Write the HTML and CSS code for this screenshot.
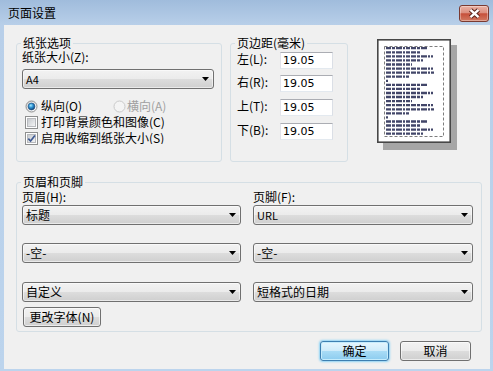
FILE: index.html
```html
<!DOCTYPE html>
<html lang="zh-CN">
<head>
<meta charset="utf-8">
<title>页面设置</title>
<link rel="stylesheet" href="styles.css">
</head>
<body>
<div class="win">
  <div class="titlebar">
    <span class="title">页面设置</span>
    <div class="close">
      <svg width="13" height="11" viewBox="0 0 13 11"><path d="M2.5 1.8 L10.5 9.2 M10.5 1.8 L2.5 9.2" stroke="#5a221a" stroke-width="4.4" fill="none"/><path d="M2.5 1.8 L10.5 9.2 M10.5 1.8 L2.5 9.2" stroke="#ffffff" stroke-width="2.4" fill="none"/></svg>
    </div>
  </div>
  <div class="client">
    <div class="toprow">
      <div class="grp paper">
        <div class="legend">纸张选项</div>
        <div class="lbl">纸张大小(Z):</div>
        <div class="combo paper-combo"><span class="ct lat">A4</span><svg class="arrow" width="7" height="4" viewBox="0 0 7 4"><path d="M0 0H7L3.5 4Z"/></svg></div>
        <div class="radios">
          <div class="opt first">
            <svg width="13" height="13" viewBox="0 0 13 13"><defs><linearGradient id="rbg1" x1="0" y1="0" x2="1" y2="1"><stop offset="0" stop-color="#cfd1d4"/><stop offset="1" stop-color="#ffffff"/></linearGradient><radialGradient id="rdot1" cx="40%" cy="35%" r="70%"><stop offset="0" stop-color="#a8ecff"/><stop offset=".45" stop-color="#2e93d4"/><stop offset="1" stop-color="#0c3c6e"/></radialGradient></defs><circle cx="6.5" cy="6.5" r="5.5" fill="url(#rbg1)" stroke="#8e8f8f"/><circle cx="6.5" cy="6.5" r="3.4" fill="url(#rdot1)" stroke="#1c4a7a" stroke-width=".6"/></svg>
            <span class="t">纵向(O)</span>
          </div>
          <div class="opt disabled">
            <svg width="13" height="13" viewBox="0 0 13 13"><circle cx="6.5" cy="6.5" r="5.5" fill="#f4f4f4" stroke="#cacaca"/></svg>
            <span class="t">横向(A)</span>
          </div>
        </div>
        <div class="opt">
          <svg width="13" height="13" viewBox="0 0 13 13"><defs><linearGradient id="cbg1" x1="0" y1="0" x2="1" y2="1"><stop offset="0" stop-color="#c3c7cc"/><stop offset="1" stop-color="#f7f7f7"/></linearGradient></defs><rect x=".5" y=".5" width="12" height="12" fill="#fff" stroke="#8e8f8f"/><rect x="2.5" y="2.5" width="8" height="8" fill="url(#cbg1)" stroke="#b7b9bd"/></svg>
          <span class="t">打印背景颜色和图像(C)</span>
        </div>
        <div class="opt">
          <svg width="13" height="13" viewBox="0 0 13 13"><defs><linearGradient id="cbg2" x1="0" y1="0" x2="1" y2="1"><stop offset="0" stop-color="#c3c7cc"/><stop offset="1" stop-color="#f7f7f7"/></linearGradient></defs><rect x=".5" y=".5" width="12" height="12" fill="#fff" stroke="#8e8f8f"/><rect x="2.5" y="2.5" width="8" height="8" fill="url(#cbg2)" stroke="#b7b9bd"/><path d="M3.3 6.6 L5.6 9 L9.9 3.4" stroke="#3f5a93" stroke-width="1.7" fill="none"/></svg>
          <span class="t clip">启用收缩到纸张大小(S)</span>
        </div>
      </div>

      <div class="grp margins">
        <div class="legend">页边距(毫米)</div>
        <div class="mrow"><span class="mlbl">左(L):</span><div class="input">19.05</div></div>
        <div class="mrow"><span class="mlbl">右(R):</span><div class="input">19.05</div></div>
        <div class="mrow"><span class="mlbl">上(T):</span><div class="input">19.05</div></div>
        <div class="mrow"><span class="mlbl">下(B):</span><div class="input">19.05</div></div>
      </div>

      <div class="preview">
        <svg width="80" height="111" viewBox="0 0 80 111">
          <rect x="6" y="6" width="74" height="105" fill="#a6a6a6"/>
          <rect x="0.8" y="0.8" width="72.4" height="102.4" fill="#ffffff" stroke="#474747" stroke-width="1.6"/>
          <rect x="7.5" y="7.5" width="59" height="90" fill="none" stroke="#7d7d7d" stroke-dasharray="3 2"/>
          <g stroke="#22264f" stroke-width="2.3" stroke-dasharray="5 1 3 1 6 1 2 1 4 1" fill="none" opacity=".85">
            <path d="M9 9.2h42"/><path d="M9 13.3h34"/><path d="M9 17.3h47"/><path d="M9 21.4h37"/><path d="M9 25.5h26"/><path d="M9 29.6h47"/><path d="M9 33.6h48"/><path d="M9 37.7h23"/><path d="M9 41.8h2"/>
            <path d="M9 45.8h42"/><path d="M9 49.9h34"/><path d="M9 54h47"/><path d="M9 58h37"/><path d="M9 62.1h26"/><path d="M9 66.2h47"/><path d="M9 70.3h48"/><path d="M9 74.3h23"/><path d="M9 78.4h2"/>
            <path d="M9 82.5h42"/><path d="M9 86.5h34"/><path d="M9 90.6h47"/><path d="M9 94.7h37"/>
          </g>
        </svg>
      </div>
    </div>

    <div class="grp hf">
      <div class="legend">页眉和页脚</div>
      <div class="cols">
        <div class="col left">
          <div class="lbl">页眉(H):</div>
          <div class="combo c1"><span class="ct">标题</span><svg class="arrow" width="7" height="4" viewBox="0 0 7 4"><path d="M0 0H7L3.5 4Z"/></svg></div>
          <div class="combo c2"><span class="ct">-空-</span><svg class="arrow" width="7" height="4" viewBox="0 0 7 4"><path d="M0 0H7L3.5 4Z"/></svg></div>
          <div class="combo c3"><span class="ct">自定义</span><svg class="arrow" width="7" height="4" viewBox="0 0 7 4"><path d="M0 0H7L3.5 4Z"/></svg></div>
          <div class="btn fontbtn">更改字体(N)</div>
        </div>
        <div class="col right">
          <div class="lbl">页脚(F):</div>
          <div class="combo c1"><span class="ct lat">URL</span><svg class="arrow" width="7" height="4" viewBox="0 0 7 4"><path d="M0 0H7L3.5 4Z"/></svg></div>
          <div class="combo c2"><span class="ct">-空-</span><svg class="arrow" width="7" height="4" viewBox="0 0 7 4"><path d="M0 0H7L3.5 4Z"/></svg></div>
          <div class="combo c3"><span class="ct">短格式的日期</span><svg class="arrow" width="7" height="4" viewBox="0 0 7 4"><path d="M0 0H7L3.5 4Z"/></svg></div>
        </div>
      </div>
    </div>

    <div class="actions">
      <div class="btn def ok">确定</div>
      <div class="btn cancel">取消</div>
    </div>
  </div>
</div>
</body>
</html>
```

FILE: styles.css
```css
* { box-sizing: border-box; margin: 0; padding: 0; }
html, body { width: 493px; height: 371px; overflow: hidden; }
body {
  font-family: "Noto Sans CJK SC", "Microsoft YaHei", sans-serif;
  font-size: 12px;
  line-height: 12px;
  color: #000;
  background: #bcd3ec;
}
.win {
  width: 493px;
  height: 371px;
  display: flex;
  flex-direction: column;
  padding: 0 3px 2px 4px;
  background: linear-gradient(#a0bcdc 0px, #b8cfe9 25px, #bcd4ed 100%);
}
.titlebar {
  height: 25px;
  flex: none;
  display: flex;
  align-items: flex-start;
}
.title { margin: 7px 0 0 4px; line-height: 12px; }
.close {
  margin: 5px 1px 0 auto;
  width: 30px;
  height: 17px;
  border: 1px solid #7a3a31;
  border-radius: 3px;
  background: linear-gradient(#eab1a4 0%, #dc8f7f 45%, #c6503b 52%, #d27a62 100%);
  box-shadow: inset 0 0 0 1px rgba(255,255,255,.35);
  display: flex;
  align-items: center;
  justify-content: center;
}
.close svg { display: block; }
.client {
  flex: 1;
  background: #f0f0f0;
  padding: 12px 0 0 12px;
  display: flex;
  flex-direction: column;
}
.toprow { display: flex; align-items: flex-start; flex: none; }
.grp {
  border: 1px solid #d5dfe5;
  border-radius: 3px;
  margin-top: 6px;
  flex: none;
}
.legend {
  width: max-content;
  height: 12px;
  line-height: 12px;
  margin: -7px 0 0 -1px;
  padding: 0 2px;
  background: #f0f0f0;
}
.lbl { height: 12px; line-height: 12px; white-space: nowrap; }

/* paper group */
.paper { width: 206px; height: 119px; padding: 0 7px 0 5px; }
.paper .lbl { margin-top: 2px; }
.paper-combo { margin-top: 6px; }
.radios { display: flex; margin-top: 9px; }
.opt { display: flex; align-items: center; height: 16px; padding-left: 3px; white-space: nowrap; }
.opt svg { display: block; flex: none; }
.opt .t { margin-left: 3px; }
.radios .first { width: 88px; }
.disabled { color: #a0a0a0; }
.disabled .t { margin-left: 1px; }
.clip { max-width: 125px; overflow: hidden; }

/* margins group */
.margins { width: 118px; height: 119px; margin-left: 8px; padding: 0 0 0 6px; }
.margins .legend { margin-left: -2px; }
.mrow { display: flex; align-items: center; height: 17px; margin-top: 7px; }
.mrow:nth-child(2) { margin-top: 3px; }
.mrow:nth-child(3) { margin-top: 6px; }
.mlbl { width: 43px; white-space: nowrap; margin-top: -3px; }
.input {
  width: 53px;
  height: 17px;
  background: #fff;
  border: 1px solid;
  border-color: #abadb3 #dbdfe6 #e3e9ef #e2e3ea;
  padding-left: 2px;
  font-family: "DejaVu Sans", sans-serif;
  font-size: 11px;
  line-height: 15px;
}

/* preview */
.preview { margin: 2px 0 0 29px; flex: none; }
.preview svg { display: block; }

/* combos & buttons */
.combo {
  height: 20px;
  border: 1px solid #707070;
  border-radius: 3px;
  background: linear-gradient(#f2f2f2 0%, #ebebeb 50%, #dddddd 50%, #cfcfcf 100%);
  box-shadow: inset 0 0 0 1px rgba(255,255,255,.55);
  display: flex;
  align-items: center;
  padding: 0 4px 0 3px;
}
.combo .ct { flex: 1; white-space: nowrap; }
.combo .lat { font-size: 11px; }
.arrow { display: block; flex: none; }

.hf { width: 466px; height: 150px; margin-top: 20px; padding: 0 8px 0 5px; }
.cols { display: flex; gap: 12px; }
.col.left { width: 219px; }
.col.right { width: 220px; }
.col .lbl { margin-top: 3px; }
.col .c1 { margin-top: 2px; }
.col .c2 { margin-top: 18px; }
.col .c3 { margin-top: 19px; }

.btn {
  height: 20px;
  border: 1px solid #707070;
  border-radius: 3px;
  background: linear-gradient(#f2f2f2 0%, #ebebeb 50%, #dddddd 50%, #cfcfcf 100%);
  box-shadow: inset 0 0 0 1px rgba(255,255,255,.6);
  display: flex;
  align-items: center;
  justify-content: center;
  white-space: nowrap;
}
.fontbtn { width: 78px; margin: 5px 0 0 1px; }

.actions {
  display: flex;
  justify-content: flex-end;
  gap: 11px;
  margin-top: 9px;
  padding-right: 19px;
  flex: none;
}
.ok { width: 69px; }
.cancel { width: 71px; }
.btn.def {
  border-color: #3c7fb1;
  background: linear-gradient(#e6f6fd 0%, #cdebfa 50%, #a9dcf6 50%, #8cccef 100%);
  box-shadow: inset 0 0 0 1px #c5ecfc, 0 0 2px 1px #8fd3f5;
}
```
